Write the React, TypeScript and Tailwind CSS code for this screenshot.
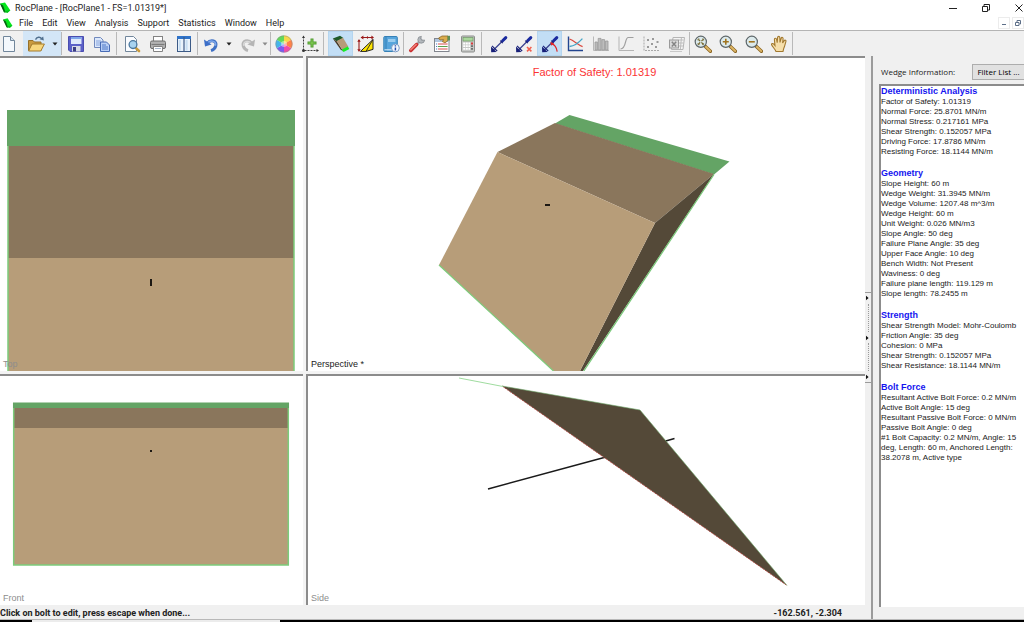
import React from "react";

const ui = "font-['Roboto','Noto_Sans',sans-serif]";
const dialog = "font-['Open_Sans','Noto_Sans',sans-serif]";
const arial = "font-['Liberation_Sans',Arial,sans-serif]";

function Logo({ size }: { size: string }) {
  return (
    <svg viewBox="0 0 11 11" className={size} aria-hidden="true">
      <path d="M0 1.6 L5 0.4 L10.4 8.4 L7.6 10.8 L4 10.2 Z" fill="#03e71c" />
      <path d="M0 1.6 L3 3.6 L5.6 10.6 L4 10.2 Z" fill="#0b5a16" />
      <path d="M4 9.6 L10 8 L7.6 10.8 Z" fill="#06b91b" />
    </svg>
  );
}

const G = "#a9a9a9";

const Bolt = ({ children }: { children?: React.ReactNode }) => (
  <>
    <path d="M3 15.5 L15 3.5" stroke="#3a4390" strokeWidth="1.3" />
    <path d="M1 11.4 L6.6 17 L1.2 17.2 Z" fill="#171f78" />
    <path d="M2 10.8 L7.2 16" stroke="#171f78" strokeWidth="1.1" />
    <path d="M12.6 5.8 L15.8 2.6" stroke="#1a2a9e" strokeWidth="3" strokeLinecap="round" />
    <path d="M10.2 5.6 L12.8 8.2" stroke="#171f78" strokeWidth="1.1" />
    {children}
  </>
);

const Lens = ({ children }: { children?: React.ReactNode }) => (
  <>
    <path d="M11.4 11.4 L16.4 16.2" stroke="#8a6420" strokeWidth="3.4" strokeLinecap="round" />
    <path d="M11.8 11.8 L16.2 16" stroke="#dcb565" strokeWidth="1.9" strokeLinecap="round" />
    <circle cx="6.8" cy="6.8" r="5.6" fill="#dceaec" stroke="#5d6669" strokeWidth="1.2" />
    {children}
  </>
);

const icons: Record<string, React.ReactNode> = {
  new: (
    <>
      <path d="M3.5 1.5 H10.5 L14.5 5.5 V16.5 H3.5 Z" fill="#f4f8fc" stroke="#71869b" />
      <path d="M10.5 1.5 V5.5 H14.5" fill="#d9e5f0" stroke="#71869b" />
    </>
  ),
  open: (
    <>
      <path d="M1.5 15.5 V5.5 H6 L7.5 7 H14 V15.5 Z" fill="#c99a3f" stroke="#95702a" />
      <path d="M1.6 16 L5 9 H17.4 L13.8 16 Z" fill="#f7d67c" stroke="#a37a2d" />
      <path d="M8.5 4.6 C10 1.8 13 1.4 14.6 3.6" fill="none" stroke="#51708f" strokeWidth="1.4" />
      <path d="M12.6 4.2 L16.8 5.6 L16.2 1.4 Z" fill="#51708f" />
    </>
  ),
  save: (
    <>
      <path d="M1.5 1.5 H16.5 V16.5 H3 L1.5 15 Z" fill="#5b60c8" stroke="#4a4db0" />
      <rect x="4" y="2" width="10.5" height="7" fill="#dfe9fb" />
      <rect x="4" y="2" width="10.5" height="2" fill="#7fa6ea" />
      <rect x="5" y="11" width="8.5" height="5.5" fill="#d8dbe6" />
      <rect x="6" y="12" width="3" height="4.5" fill="#3a3d83" />
    </>
  ),
  copy: (
    <>
      <path d="M1.5 2.5 H7.5 L10 5 V12.5 H1.5 Z" fill="#dce8fb" stroke="#7189bd" />
      <path d="M3 6 H8 M3 8 H8 M3 10 H7" stroke="#86a4dd" />
      <path d="M7.5 7 H13.5 L16.5 10 V16.5 H7.5 Z" fill="#b9cff5" stroke="#476bb5" />
      <path d="M9 10 H13 M9 12 H15 M9 14 H15" stroke="#4f78c7" />
    </>
  ),
  preview: (
    <>
      <path d="M2.5 1.5 H10.5 L13.5 4.5 V16.5 H2.5 Z" fill="#fafcff" stroke="#71869b" />
      <path d="M12.4 12.6 L16 16" stroke="#c99b3e" strokeWidth="2.6" strokeLinecap="round" />
      <circle cx="10" cy="9.6" r="3.9" fill="#a8d3f0" stroke="#49769d" strokeWidth="1.3" />
    </>
  ),
  print: (
    <>
      <rect x="4.5" y="1.5" width="9" height="6" fill="#fff" stroke="#838383" />
      <rect x="1.5" y="6" width="15" height="7.5" rx="1.5" fill="#b2b2b2" stroke="#6d6d6d" />
      <path d="M2.5 9.5 H15.5" stroke="#7b7b7b" strokeWidth="1.2" />
      <path d="M4.5 11.5 H13.5 V16.5 H4.5 Z" fill="#fff" stroke="#838383" />
      <path d="M6 13.5 H12" stroke="#a9b8cc" />
    </>
  ),
  columns: (
    <>
      <rect x="2.5" y="1.5" width="13" height="15" fill="#eaf3fb" stroke="#3c5a86" />
      <rect x="2" y="1" width="14" height="3" fill="#2f73c9" />
      <path d="M9 2 V16.5" stroke="#3c5a86" strokeWidth="1.2" />
      <path d="M4.8 5 V15.5 M11.6 5 V15.5" stroke="#c7def2" strokeWidth="2" />
    </>
  ),
  undo: (
    <>
      <path d="M5 8.5 C9 3.6 15.5 6 13.8 11 C13 13.4 11 15 9 15.6" fill="none" stroke="#3f70c4" strokeWidth="3" />
      <path d="M5.4 8.2 C9 4.2 14.8 6.4 13.4 10.8" fill="none" stroke="#7ea8ea" strokeWidth="1.4" />
      <path d="M2 4.4 L3 11.6 L9.6 9.6 Z" fill="#3c6fc8" />
    </>
  ),
  redo: (
    <>
      <path d="M13 8.5 C9 3.6 2.5 6 4.2 11 C5 13.4 7 15 9 15.6" fill="none" stroke="#b5b5b5" strokeWidth="3" />
      <path d="M12.6 8.4 C9 4.6 3.8 6.4 4.8 10.8" fill="none" stroke="#d9d9d9" strokeWidth="1.3" />
      <path d="M16 4.4 L15 11.6 L8.4 9.6 Z" fill="#b5b5b5" />
    </>
  ),
  colors: (
    <>
      <path d="M9 9 L9 0.6 A8.4 8.4 0 0 1 16.3 4.8 Z" fill="#f8d84a" />
      <path d="M9 9 L16.3 4.8 A8.4 8.4 0 0 1 16.3 13.2 Z" fill="#ff8248" />
      <path d="M9 9 L16.3 13.2 A8.4 8.4 0 0 1 9 17.4 Z" fill="#f04aa8" />
      <path d="M9 9 L9 17.4 A8.4 8.4 0 0 1 1.7 13.2 Z" fill="#7a5af0" />
      <path d="M9 9 L1.7 13.2 A8.4 8.4 0 0 1 1.7 4.8 Z" fill="#45b5ea" />
      <path d="M9 9 L1.7 4.8 A8.4 8.4 0 0 1 9 0.6 Z" fill="#62d95a" />
      <circle cx="9" cy="9" r="3" fill="#fff" opacity="0.45" />
      <circle cx="9" cy="9" r="8.2" stroke="#8a8a8a" strokeWidth="0.5" />
    </>
  ),
  axes: (
    <>
      <path d="M2.5 1.5 V15.5 H17" fill="none" stroke="#3d3d3d" strokeDasharray="2 1" />
      <path d="M1 3 L2.5 0.5 L4 3 Z M15.5 14 L18 15.5 L15.5 17 Z" fill="#333" />
      <circle cx="2.5" cy="15.5" r="1.5" fill="#333" />
      <path d="M11 3.5 V12.5 M6.5 8 H15.5" stroke="#4f9a2f" strokeWidth="3" />
      <path d="M11 4.4 V11.6 M7.4 8 H14.6" stroke="#86cf57" strokeWidth="1" />
    </>
  ),
  wedge: (
    <>
      <path d="M0.8 3.6 L8 0.8 L11.4 3 L5 6.6 Z" fill="#1d5a27" />
      <path d="M0.8 3.6 L5 6.4 L11.4 16.8 L8.4 14.2 Z" fill="#4d3a25" />
      <path d="M4.6 6 L11 2.8 L16.4 11.8 L10.6 15 Z" fill="#b69b79" />
      <path d="M9.8 14.6 L15.8 11.6 L17.4 14 L11.6 17 Z" fill="#16ee25" />
    </>
  ),
  dims: (
    <>
      <path d="M3.5 16.4 L16 4.5 V14.4 L9 16.4 Z" fill="#ffe600" stroke="#222" />
      <path d="M9 16.4 L16 4.5" stroke="#222" strokeWidth="0.9" />
      <path d="M4 2.5 H16 M2 5 V16" stroke="#9b1a1a" strokeWidth="1.1" />
      <path d="M3.6 2.5 L6.4 0.6 V4.4 Z M17 2.5 L14.4 0.6 V4.4 Z M2 4 L0.3 6.8 H3.7 Z M2 17 L0.3 14.2 H3.7 Z M9 2.5 L11 1 V4 Z" fill="#9b1a1a" />
    </>
  ),
  book: (
    <>
      <rect x="1.8" y="1.5" width="13.5" height="15" rx="1" fill="#57a5dc" stroke="#3580b6" />
      <path d="M4 2 V16" stroke="#3580b6" />
      <rect x="6" y="4" width="7.4" height="3" fill="#9accee" />
      <path d="M2.5 14.8 H15" stroke="#dcecf6" />
      <circle cx="13.4" cy="13" r="3.9" fill="#f5f9ff" stroke="#7a9cc6" />
      <path d="M13.4 12.4 V15.4 M13.4 10.2 V11.5" stroke="#234aa8" strokeWidth="1.5" />
    </>
  ),
  wrench: (
    <>
      <path d="M9.2 8.8 L14 4" stroke="#a8adb2" strokeWidth="2.6" />
      <path d="M13.4 1.4 A3.4 3.4 0 1 0 16.6 5 L14 5.4 L12.6 4 Z" fill="#b3b8bd" stroke="#868b90" strokeWidth="0.8" />
      <path d="M2.8 15.4 L8.6 9.6" stroke="#c93030" strokeWidth="3.6" strokeLinecap="round" />
      <path d="M2.8 14.8 L8.2 9.4" stroke="#f4837a" strokeWidth="1.4" strokeLinecap="round" />
    </>
  ),
  props: (
    <>
      <rect x="1.5" y="3.5" width="14.5" height="13" fill="#fff" stroke="#82868e" />
      <rect x="2" y="4" width="13.5" height="3" fill="#b0c5df" />
      <path d="M5 9 H14.6" stroke="#d94e4e" />
      <path d="M5 11.5 H14.6" stroke="#5aa04a" />
      <path d="M5 14 H14.6" stroke="#d94e4e" />
      <path d="M3 9 H4.2 M3 11.5 H4.2 M3 14 H4.2" stroke="#4a78c2" />
      <path d="M5.6 3 L9 1 H15 V5.6 L12 7.8 L9.4 6.6 L10.6 4.6 L7 5 Z" fill="#dbac4d" stroke="#8a6724" strokeWidth="0.8" />
      <rect x="14.5" y="0.8" width="2.5" height="4.6" fill="#5c8f55" />
    </>
  ),
  calc: (
    <>
      <rect x="2.5" y="1" width="13" height="16" rx="1" fill="#c6c8c6" stroke="#8c8e8c" />
      <rect x="4" y="2.6" width="10" height="3.4" fill="#a9d79c" stroke="#6f9766" strokeWidth="0.7" />
      <path d="M4.2 8.5 H11 M4.2 11.2 H11 M4.2 13.9 H11" stroke="#fff" strokeWidth="1.8" strokeDasharray="2 .6" />
      <path d="M12 8.5 H14" stroke="#d83b3b" strokeWidth="1.8" />
      <path d="M12 11.2 H14 M12 13.9 H14" stroke="#6e706e" strokeWidth="1.8" />
    </>
  ),
  bolt: <Bolt />,
  boltDelete: (
    <Bolt>
      <path d="M12 12 L16.4 16.4 M16.4 12 L12 16.4" stroke="#f2604f" strokeWidth="1.6" />
    </Bolt>
  ),
  boltEdit: (
    <Bolt>
      <path d="M10.4 8.4 C13.4 9.6 15.6 12.6 16.2 16.6" fill="none" stroke="#e02424" strokeWidth="1.2" />
      <path d="M9.2 7 L13 8.2 L10.4 10.8 Z" fill="#e02424" />
    </Bolt>
  ),
  chart: (
    <>
      <path d="M2.5 1.5 V15.5 H17" fill="none" stroke="#23458f" strokeWidth="1.4" />
      <path d="M3.5 4 C8 5.5 11.5 9.6 16.6 11.6" fill="none" stroke="#d9493f" strokeWidth="1.3" />
      <path d="M3.5 11.5 C8.5 11 12.5 8 16.4 3.6" fill="none" stroke="#43a5c7" strokeWidth="1.3" />
    </>
  ),
  bars: (
    <>
      <path d="M1.5 1.5 V15.5 H17" fill="none" stroke="#b9b9b9" />
      <path d="M3 7 H5.4 V15 H3 Z M6.2 3.4 H9 V15 H6.2 Z M9.8 4.6 H12.6 V15 H9.8 Z M13.4 6 H16 V15 H13.4 Z" fill="#bdbdbd" stroke="#999" strokeWidth="0.8" />
    </>
  ),
  curve: (
    <>
      <path d="M2 1.5 V15.5 H17" fill="none" stroke="#b5b5b5" />
      <path d="M3.5 14 C9.5 14 7.6 3 11 2.5 H16.5" fill="none" stroke="#9f9f9f" strokeWidth="1.2" />
    </>
  ),
  scatter: (
    <>
      <path d="M2 1.5 V15.5 H17" fill="none" stroke={G} strokeDasharray="2 1" />
      <path d="M5 4 h2v2h-2z M10 3 h2v2h-2z M14.5 6 h2v2h-2z M5 11 h2v2h-2z M9 8 h2v2h-2z M13 11 h2v2h-2z" fill="#9a9a9a" />
    </>
  ),
  excel: (
    <>
      <path d="M5 2.5 H16.5 L15 14.5 H3.5 Z" fill="#f4f4f4" stroke="#b5b5b5" />
      <path d="M11 5 H15.6 M11 8 H15.4 M11 11 H15 M13.4 3 L12.4 14" stroke="#bdbdbd" />
      <rect x="1.5" y="5" width="9" height="8" fill="#dadada" stroke="#9a9a9a" />
      <path d="M3.8 6.8 L8.2 11.4 M8.2 6.8 L3.8 11.4" stroke="#858585" strokeWidth="1.5" />
      <path d="M2 16.5 H14" stroke="#c8c8c8" />
    </>
  ),
  zoomAll: (
    <Lens>
      <path d="M4.6 4.6 L9 9 M9 4.6 L4.6 9" stroke="#75672e" strokeWidth="1.2" strokeDasharray="2.2 1.8" />
      <path d="M4 5.4 V4 H5.4 M8.2 4 H9.6 V5.4 M9.6 8.2 V9.6 H8.2 M5.4 9.6 H4 V8.2" fill="none" stroke="#75672e" strokeWidth="0.9" />
    </Lens>
  ),
  zoomIn: (
    <Lens>
      <path d="M6.8 3.8 V9.8 M3.8 6.8 H9.8" stroke="#a07420" strokeWidth="1.6" />
    </Lens>
  ),
  zoomOut: (
    <Lens>
      <path d="M3.8 6.8 H9.8" stroke="#a07420" strokeWidth="1.6" />
    </Lens>
  ),
  pan: (
    <path
      d="M6 16.5 C5 14 2.4 11.6 1.6 9.8 C1.2 8.6 2.8 8 3.8 9.2 L5 10.6 L4.4 4.6 C4.3 3 6.2 2.8 6.6 4.4 L7.2 7.6 L7.6 2.4 C7.8 1 9.6 1 9.8 2.4 L10 7.4 L11.2 3.2 C11.7 1.9 13.3 2.4 13.1 3.8 L12.6 8 L14.2 5.6 C15 4.6 16.4 5.4 15.9 6.6 C15 9 15 11 13.8 13.2 L13 16.5 Z"
      fill="#f6dfab"
      stroke="#a2792f"
      strokeWidth="1.1"
    />
  ),
};

type Tool = { icon: string; label: string; wide?: boolean; active?: boolean };

function ToolButton({ icon, label, wide, active }: Tool) {
  return (
    <button
      type="button"
      aria-label={label}
      aria-pressed={active}
      className={`flex h-[25px] shrink-0 items-center justify-center ${wide ? "w-[26px]" : "w-[25px]"} ${
        active ? "border border-[#b5d5ef] bg-[#c2def5]" : ""
      }`}
    >
      <svg viewBox="0 0 18 18" className="h-[18px] w-[18px] shrink-0" fill="none" aria-hidden="true">
        {icons[icon]}
      </svg>
    </button>
  );
}

function Caret({ label, tone, className = "w-3" }: { label: string; tone: string; className?: string }) {
  return (
    <button type="button" aria-label={label} className={`flex h-[25px] shrink-0 items-center justify-center ${className}`}>
      <svg viewBox="0 0 6 4" className={`h-1 w-1.5 ${tone}`} aria-hidden="true">
        <path d="M0.5 0.5 H5.5 L3 3.5 Z" fill="currentColor" />
      </svg>
    </button>
  );
}

const Sep = ({ className = "" }: { className?: string }) => (
  <span className={`h-[23px] w-px shrink-0 bg-[#b9b9b9] ${className}`} />
);

function Toolbar() {
  return (
    <div role="toolbar" aria-label="Main" className="flex h-[26px] shrink-0 items-center overflow-hidden border-t border-[#b4b4b4] bg-[#f0f0f0]">
      <div className="-ml-1 flex">
        <ToolButton icon="new" label="New" wide />
      </div>
      <div className="ml-px flex bg-[#d3e6f7]">
        <ToolButton icon="open" label="Open" wide />
        <Caret label="Recent files" tone="text-[#222]" />
      </div>
      <Sep className="mr-px" />
      <ToolButton icon="save" label="Save" wide />
      <ToolButton icon="copy" label="Copy" wide />
      <Sep className="ml-px mr-0.5" />
      <ToolButton icon="preview" label="Print preview" wide />
      <ToolButton icon="print" label="Print" wide />
      <ToolButton icon="columns" label="Tile" wide />
      <Sep />
      <ToolButton icon="undo" label="Undo" />
      <Caret label="Undo list" tone="text-[#222]" />
      <ToolButton icon="redo" label="Redo" />
      <Caret label="Redo list" tone="text-[#8a8a8a]" className="w-2.5" />
      <Sep />
      <ToolButton icon="colors" label="Display options" wide />
      <ToolButton icon="axes" label="Add axes" wide />
      <Sep className="mr-1" />
      <ToolButton icon="wedge" label="Wedge view" active />
      <ToolButton icon="dims" label="Input data" />
      <ToolButton icon="book" label="Info viewer" />
      <Sep />
      <ToolButton icon="wrench" label="Settings" />
      <ToolButton icon="props" label="Properties" wide />
      <ToolButton icon="calc" label="Compute" />
      <Sep className="ml-px mr-1" />
      <ToolButton icon="bolt" label="Add bolt" />
      <ToolButton icon="boltDelete" label="Delete bolt" wide />
      <ToolButton icon="boltEdit" label="Edit bolt" active />
      <ToolButton icon="chart" label="Sensitivity" wide />
      <ToolButton icon="bars" label="Histogram" />
      <ToolButton icon="curve" label="Cumulative" />
      <ToolButton icon="scatter" label="Scatter" wide />
      <ToolButton icon="excel" label="Export" />
      <Sep />
      <ToolButton icon="zoomAll" label="Zoom all" />
      <ToolButton icon="zoomIn" label="Zoom in" wide />
      <ToolButton icon="zoomOut" label="Zoom out" />
      <ToolButton icon="pan" label="Pan" wide />
      <Sep />
    </div>
  );
}

type PaneProps = { label: string; active?: boolean; left?: boolean; viewBox: string; title?: string; children: React.ReactNode };

function Pane({ label, active, left, viewBox, title, children }: PaneProps) {
  return (
    <section
      aria-label={label}
      className={`relative min-h-0 min-w-0 overflow-hidden border-t-2 border-[#8c8c8c] bg-white ${left ? "" : "border-l-2"}`}
    >
      <svg viewBox={viewBox} className="block h-full w-full" aria-hidden="true">
        {children}
      </svg>
      {title && (
        <p className={`absolute inset-x-0 top-2 pl-4 text-center text-[11px] leading-[13px] text-[#fb3434] ${arial}`}>{title}</p>
      )}
      <span className={`absolute bottom-0.5 left-[3px] text-[9px] leading-[10px] ${active ? "text-[#222]" : "text-[#8d8d8d]"} ${arial}`}>
        {label}
      </span>
    </section>
  );
}

function Views() {
  return (
    <div className="grid min-h-0 min-w-0 flex-1 grid-cols-[303fr_559fr] grid-rows-[315fr_231fr] gap-[3px] bg-[#f4f4f4]">
      <Pane label="Top" left viewBox="0 58 303 313">
        <rect x="8" y="146" width="286" height="112" fill="#8a765c" />
        <rect x="8" y="258" width="286" height="113" fill="#b79d79" />
        <path d="M8 110 V371 M294 110 V371" stroke="#7ccb7b" strokeWidth="1.5" />
        <rect x="7" y="110" width="288" height="36" fill="#64a465" />
        <rect x="150" y="279" width="2" height="7" fill="#1c1813" />
      </Pane>
      <Pane label="Perspective *" active viewBox="308 58 557 313" title="Factor of Safety: 1.01319">
        <path d="M555 123.5 L569.5 115 L729.5 161.5 L714 174.5 Z" fill="#64a465" />
        <path d="M497.5 152 L555 123 L714 174 L655 223 Z" fill="#8a765c" />
        <path d="M655 223 L714 174 L583 371 H580 Z" fill="#544938" />
        <path d="M714 174.5 L583.5 371.5" stroke="#78c878" strokeWidth="1.2" />
        <path d="M497.5 152 L655 223 L580 371 H553.5 L439 265 Z" fill="#b79d79" />
        <path d="M439 265 L554 371.5" stroke="#7ccb7b" strokeWidth="1.2" />
        <rect x="545" y="204" width="5" height="2" fill="#1c1813" />
      </Pane>
      <Pane label="Front" left viewBox="0 376 303 229">
        <rect x="14" y="408" width="274" height="20" fill="#8a765c" />
        <rect x="14" y="428" width="274" height="137" fill="#b79d79" />
        <path d="M13.7 403 V565 H288.3 V403" fill="none" stroke="#7ccb7b" strokeWidth="1.5" />
        <rect x="13" y="402.5" width="276" height="5.5" fill="#64a465" />
        <rect x="150" y="450" width="2" height="2" fill="#1c1813" />
      </Pane>
      <Pane label="Side" viewBox="308 376 557 229">
        <path d="M488 489 L606 457 M664 441.5 L674.5 438.5" stroke="#1a1a1a" strokeWidth="1.5" />
        <path d="M502 386 L640 410 L787 585.5 Z" fill="#544938" />
        <path d="M502 386 L787 585.5" stroke="#b0463f" strokeWidth="0.9" strokeDasharray="2 1" />
        <path d="M502 386 L640 410 L787 585.5" stroke="#6fa96a" strokeWidth="0.6" fill="none" />
        <path d="M459 378 L503 386.5" stroke="#9fdc9f" />
      </Pane>
    </div>
  );
}

function Splitter() {
  return (
    <div className="flex w-2 shrink-0 flex-col border-r-2 border-[#9b9b9b] bg-[#f0f0f0] pt-[236px]">
      <div className="flex h-[91px] flex-col items-center justify-between border-y border-[#9b9b9b] py-0.5">
        {["Dock", "Toggle", "Expand"].map((name, i) => (
          <React.Fragment key={name}>
            {i > 0 && <span className="h-7 border-l border-dotted border-[#9b9b9b]" />}
            <button type="button" aria-label={name} className="flex h-[6px] w-1 items-center">
              <svg viewBox="0 0 3 6" className="h-[6px] w-[3px]" aria-hidden="true">
                <path d="M0 0.8 L2.6 3 L0 5.2 Z" fill="#111" />
              </svg>
            </button>
          </React.Fragment>
        ))}
      </div>
    </div>
  );
}

const sections = [
  {
    title: "Deterministic Analysis",
    lines: [
      "Factor of Safety: 1.01319",
      "Normal Force: 25.8701 MN/m",
      "Normal Stress: 0.217161 MPa",
      "Shear Strength: 0.152057 MPa",
      "Driving Force: 17.8786 MN/m",
      "Resisting Force: 18.1144 MN/m",
    ],
  },
  {
    title: "Geometry",
    lines: [
      "Slope Height: 60 m",
      "Wedge Weight: 31.3945 MN/m",
      "Wedge Volume: 1207.48 m^3/m",
      "Wedge Height: 60 m",
      "Unit Weight: 0.026 MN/m3",
      "Slope Angle: 50 deg",
      "Failure Plane Angle: 35 deg",
      "Upper Face Angle: 10 deg",
      "Bench Width: Not Present",
      "Waviness: 0 deg",
      "Failure plane length: 119.129 m",
      "Slope length: 78.2455 m",
    ],
  },
  {
    title: "Strength",
    lines: [
      "Shear Strength Model: Mohr-Coulomb",
      "Friction Angle: 35 deg",
      "Cohesion: 0 MPa",
      "Shear Strength: 0.152057 MPa",
      "Shear Resistance: 18.1144 MN/m",
    ],
  },
  {
    title: "Bolt Force",
    lines: [
      "Resultant Active Bolt Force: 0.2 MN/m",
      "Active Bolt Angle: 15 deg",
      "Resultant Passive Bolt Force: 0 MN/m",
      "Passive Bolt Angle: 0 deg",
      "#1 Bolt Capacity: 0.2 MN/m, Angle: 15 deg, Length: 60 m, Anchored Length: 38.2078 m, Active type",
    ],
  },
];

function InfoPanel() {
  return (
    <aside className="flex w-[151px] shrink-0 flex-col bg-[#f0f0f0] pt-2 pb-3">
      <div className={`flex items-center justify-between pb-1 pl-2 text-[8px] ${dialog}`}>
        <span className="leading-4 text-[#222]">Wedge Information:</span>
        <button
          type="button"
          className="h-4 w-[52px] whitespace-nowrap border border-r-0 border-[#adadad] bg-[#e1e1e1] leading-3 text-black"
        >
          Filter List ...
        </button>
      </div>
      <div className={`ml-1.5 flex min-h-0 flex-1 flex-col gap-[11px] overflow-hidden border-t-2 border-l-2 border-[#8c8c8c] bg-white text-[8px] leading-[10px] text-[#222] ${arial}`}>
        {sections.map((s) => (
          <section key={s.title}>
            <h2 className="text-[9px] leading-[11px] font-bold text-[#1414f0]">{s.title}</h2>
            {s.lines.map((l) => (
              <p key={l} className="pr-0.5">
                {l}
              </p>
            ))}
          </section>
        ))}
      </div>
    </aside>
  );
}

const menus = ["File", "Edit", "View", "Analysis", "Support", "Statistics", "Window", "Help"];

export default function App() {
  return (
    <div className="flex h-screen flex-col overflow-hidden bg-white text-[#222]">
      <header className={`flex h-[15px] shrink-0 items-center text-[9px] leading-3 ${ui}`}>
        <Logo size="h-[11px] w-[11px]" />
        <h1 className="ml-1 flex-1">RocPlane - [RocPlane1 - FS=1.01319*]</h1>
        <div className="flex items-center gap-[25px] pr-px">
          <button type="button" aria-label="Minimize">
            <svg viewBox="0 0 8 8" className="h-2 w-2"><path d="M0 4.5 H8" stroke="#222" /></svg>
          </button>
          <button type="button" aria-label="Restore">
            <svg viewBox="0 0 8 8" className="h-2 w-2" fill="none"><path d="M0.5 2.5 H5.5 V7.5 H0.5 Z M2 2 V0.5 H7.5 V6 H6" stroke="#222" /></svg>
          </button>
          <button type="button" aria-label="Close">
            <svg viewBox="0 0 8 8" className="h-2 w-2"><path d="M0.5 0.5 L7.5 7.5 M7.5 0.5 L0.5 7.5" stroke="#222" /></svg>
          </button>
        </div>
      </header>

      <nav aria-label="Menu bar" className={`flex h-[15px] shrink-0 items-center pl-[3px] text-[9px] leading-3 ${ui}`}>
        <Logo size="h-[10px] w-[10px]" />
        <div className="ml-1.5 flex flex-1 gap-[9px]">
          {menus.map((m) => (
            <button key={m} type="button">{m}</button>
          ))}
        </div>
        <div className="flex gap-0.5">
          <button type="button" aria-label="Minimize document" className="flex h-3 w-3 items-center justify-center border border-[#ececec]">
            <svg viewBox="0 0 6 6" className="h-1.5 w-1.5"><path d="M1 4.5 H5" stroke="#5d6f88" /></svg>
          </button>
          <button type="button" aria-label="Restore document" className="flex h-3 w-3 items-center justify-center border border-[#ececec]">
            <svg viewBox="0 0 6 6" className="h-1.5 w-1.5" fill="none"><path d="M0.5 2.5 H4 V5.5 H0.5 Z M2 2 V0.5 H5.5 V4 H4.5" stroke="#5d6f88" /></svg>
          </button>
        </div>
      </nav>

      <Toolbar />

      <main className="flex min-h-0 flex-1">
        <div className="flex min-w-0 flex-1 flex-col">
          <div className="flex min-h-0 flex-1">
            <Views />
          </div>
          <footer className={`flex h-[14px] shrink-0 items-end justify-between bg-[#f0f0f0] pr-[23px] text-[9px] leading-[11px] font-bold ${ui}`}>
            <span>Click on bolt to edit, press escape when done...</span>
            <span>-162.561, -2.304</span>
          </footer>
        </div>
        <Splitter />
        <InfoPanel />
      </main>

      <div aria-hidden="true" className="flex h-[3px] shrink-0 border-t border-[#b8b8b8] bg-black">
        <span className="ml-8 h-full w-[248px] bg-[#ececec]" />
      </div>
    </div>
  );
}
